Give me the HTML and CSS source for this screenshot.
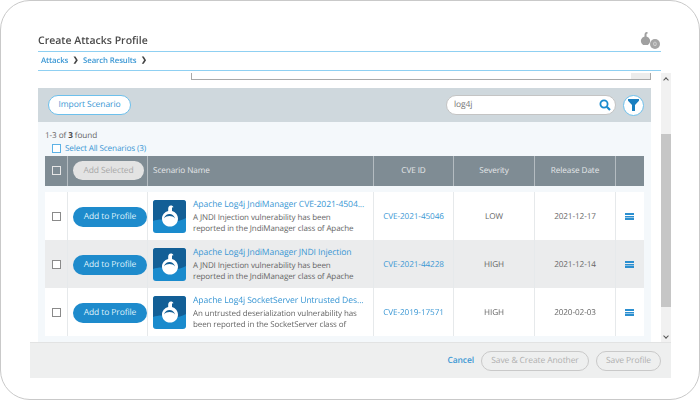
FILE: index.html
```html
<!DOCTYPE html>
<html lang="en">
<head>
    <meta charset="UTF-8">
    <title>Create Attacks Profile</title>
    <link rel="stylesheet" href="styles.css">
</head>
<body>
    <svg class="defs" width="0" height="0">
        <symbol id="bomb" viewBox="0 0 33 33">
            <path d="M3 0h27a3 3 0 0 1 3 3v27a3 3 0 0 1-3 3H3a3 3 0 0 1-3-3V3a3 3 0 0 1 3-3z" fill="#1a8bcd"/>
            <path d="M0 3a3 3 0 0 1 3-3h27a3 3 0 0 1 3 3v15c-5 3-10 4-16.500 2.500C10 19 5 19 0 21z" fill="#135f96"/>
            <path d="M20.500 7.500c-.6-2.300-3.700-2.600-4.800-.8-.6 1-.5 2.500-.5 4.300-3.700 1-6.200 4-6.200 7.700 0 4.400 3.500 7.800 8 7.800s8-3.400 8-7.800c0-3.600-2.500-6.700-6-7.700V8.500c0-1 .9-1.500 1.600-.8z" fill="#fff"/>
            <path d="M10.800 18.500c1.300-3.300 3.300-4.500 5.700-4.500s4.400 1.200 5.700 4.500c-1.700-1.800-3.500-2.500-5.700-2.500s-4 .7-5.700 2.500z" fill="#135f96"/>
        </symbol>
    </svg>

    <div class="frame">
        <div class="dialog">
            <div class="dialog-head">
                <h1>Create Attacks Profile</h1>
                <div class="counter">
                    <svg class="counter-icon" width="11" height="14" viewBox="0 0 11 14"><path d="M7.500 1.200C6 .6 4.500 1.600 4.500 4v1.500a4.600 4.600 0 1 0 2 0V4c0-1 .4-1.500 1.300-1.400z" fill="#a0a0a0"/></svg>
                    <span class="counter-badge">0</span>
                </div>
            </div>
            <div class="crumbs">
                <a>Attacks</a><span class="chev">&#10095;</span><a>Search Results</a><span class="chev">&#10095;</span>
            </div>

            <div class="scroll-area">
                <div class="content">
                    <div class="input-stub"><span class="stub-bar"></span></div>

                    <div class="panel">
                        <div class="toolbar">
                            <button class="btn-import">Import Scenario</button>
                            <div class="search">
                                <span>log4j</span>
                                <svg width="12" height="12" viewBox="0 0 12 12"><circle cx="5" cy="5" r="3.600" fill="none" stroke="#1a8bcd" stroke-width="1.800"/><path d="M7.800 7.800L11 11" stroke="#1a8bcd" stroke-width="2.200"/></svg>
                            </div>
                            <div class="filter">
                                <svg width="11" height="12" viewBox="0 0 11 12"><path d="M0 0h11v1.800L7 6v6H4V6L0 1.800z" fill="#1a7fc0"/></svg>
                            </div>
                        </div>

                        <div class="found">1-3 of <b>3</b> found</div>
                        <label class="select-all"><span class="check blue"></span>Select All Scenarios (3)</label>

                        <div class="row head">
                            <div class="cell"><span class="check light"></span></div>
                            <div class="cell"><button class="btn-selected">Add Selected</button></div>
                            <div class="cell left">Scenario Name</div>
                            <div class="cell">CVE ID</div>
                            <div class="cell">Severity</div>
                            <div class="cell">Release Date</div>
                            <div class="cell"></div>
                        </div>

                        <div class="rows">
                            <div class="row">
                                <div class="cell"><span class="check"></span></div>
                                <div class="cell"><button class="btn-add">Add to Profile</button></div>
                                <div class="cell scenario">
                                    <svg class="scenario-icon"><use href="#bomb"/></svg>
                                    <div class="scenario-text">
                                        <a class="scenario-title">Apache Log4j JndiManager CVE-2021-4504...</a>
                                        <p>A JNDI Injection vulnerability has been reported in the JndiManager class of Apache</p>
                                    </div>
                                </div>
                                <div class="cell"><a>CVE-2021-45046</a></div>
                                <div class="cell">LOW</div>
                                <div class="cell">2021-12-17</div>
                                <div class="cell"><span class="menu"></span></div>
                            </div>
                            <div class="row grey">
                                <div class="cell"><span class="check"></span></div>
                                <div class="cell"><button class="btn-add">Add to Profile</button></div>
                                <div class="cell scenario">
                                    <svg class="scenario-icon"><use href="#bomb"/></svg>
                                    <div class="scenario-text">
                                        <a class="scenario-title">Apache Log4j JndiManager JNDI Injection</a>
                                        <p>A JNDI Injection vulnerability has been reported in the JndiManager class of Apache</p>
                                    </div>
                                </div>
                                <div class="cell"><a>CVE-2021-44228</a></div>
                                <div class="cell">HIGH</div>
                                <div class="cell">2021-12-14</div>
                                <div class="cell"><span class="menu"></span></div>
                            </div>
                            <div class="row">
                                <div class="cell"><span class="check"></span></div>
                                <div class="cell"><button class="btn-add">Add to Profile</button></div>
                                <div class="cell scenario">
                                    <svg class="scenario-icon"><use href="#bomb"/></svg>
                                    <div class="scenario-text">
                                        <a class="scenario-title">Apache Log4j SocketServer Untrusted Des...</a>
                                        <p>An untrusted deserialization vulnerability has been reported in the SocketServer class of</p>
                                    </div>
                                </div>
                                <div class="cell"><a>CVE-2019-17571</a></div>
                                <div class="cell">HIGH</div>
                                <div class="cell">2020-02-03</div>
                                <div class="cell"><span class="menu"></span></div>
                            </div>
                        </div>
                    </div>
                </div>

                <div class="scrollbar">
                    <span class="arrow up"></span>
                    <div class="track"><div class="thumb"></div></div>
                    <span class="arrow down"></span>
                </div>
            </div>

            <div class="dialog-foot">
                <a class="cancel">Cancel</a>
                <button class="btn-save wide">Save &amp; Create Another</button>
                <button class="btn-save">Save Profile</button>
            </div>
        </div>
    </div>
</body>
</html>
```

FILE: styles.css
```css
* {
    box-sizing: border-box;
}
html, body {
    margin: 0;
    padding: 0;
    background: #fff;
}
body {
    font-family: "Open Sans", Arial, sans-serif;
    font-size: 8.2px;
    letter-spacing: -0.1px;
    text-rendering: geometricPrecision;
    color: #666;
    overflow: hidden;
}
a {
    color: #3a97d4;
}
button {
    font-family: inherit;
    letter-spacing: inherit;
    text-rendering: inherit;
    padding: 0;
}
.defs {
    position: absolute;
}
.frame {
    width: 700px;
    height: 400px;
    border: 1px solid #c9c9c9;
    border-radius: 30px;
    padding: 29px 0 0 29px;
}
/* the screenshot is a bit soft */
.dialog {
    width: 641px;
    height: 348px;
    display: flex;
    flex-direction: column;
    filter: blur(0.5px);
}
.dialog-head {
    height: 22px;
    margin-left: 8px;
    width: 623px;
    border-bottom: 1px solid #8fd0f2;
    display: flex;
    justify-content: space-between;
}
h1 {
    margin: 3px 0 0;
    font-size: 10.5px;
    font-weight: 600;
    letter-spacing: 0;
    color: #4a4a4a;
    line-height: 17px;
}
.counter {
    width: 20px;
    height: 20px;
    margin-right: 1px;
    display: flex;
    align-items: flex-start;
    padding-top: 1px;
}
.counter-icon {
    flex: none;
}
.counter-badge {
    flex: none;
    width: 10px;
    height: 10px;
    margin: 8px 0 0 -1px;
    border-radius: 50%;
    background: #a5a5a5;
    color: #eee;
    font-size: 6px;
    line-height: 10px;
    text-align: center;
}
.crumbs {
    height: 19px;
    margin-left: 8px;
    width: 623px;
    padding-left: 3px;
    border-bottom: 1px solid #8fd0f2;
    display: flex;
    align-items: center;
    font-size: 7.8px;
    font-weight: 600;
}
.chev {
    margin: 0 4.500px;
    color: #444;
    font-size: 7px;
    font-weight: 700;
}
.scroll-area {
    height: 270px;
    margin-top: 2px;
    display: flex;
    overflow: hidden;
}
.content {
    width: 631px;
    padding-left: 8px;
}
.input-stub {
    height: 7px;
    margin-left: 153px;
    width: 460px;
    border: 1px solid #a9a9a9;
    border-top: 0;
    display: flex;
    justify-content: flex-end;
}
.stub-bar {
    width: 19px;
    background: #ececec;
}
.panel {
    width: 613px;
    height: 254px;
    margin-top: 8px;
    background: #f4f8fb;
}
.toolbar {
    height: 34px;
    padding: 7px 7px 0 10px;
    background: #cfd8dd;
    display: flex;
    align-items: flex-start;
}
.btn-import {
    width: 83px;
    height: 20px;
    border: 1px solid #6dc0ec;
    border-radius: 10px;
    background: #fff;
    color: #3a97d4;
    font-size: 8.5px;
}
.search {
    width: 170px;
    height: 20px;
    margin-left: auto;
    padding: 0 4px 0 7px;
    border: 1px solid #c4c4c4;
    border-radius: 10px;
    background: #fff;
    display: flex;
    align-items: center;
    justify-content: space-between;
    font-size: 8.5px;
    color: #777;
}
.filter {
    width: 21px;
    height: 21px;
    margin-left: 7px;
    border: 1px solid #6dc0ec;
    border-radius: 50%;
    background: #fff;
    display: flex;
    align-items: center;
    justify-content: center;
}
.found {
    margin: 8px 0 0 7px;
    line-height: 12px;
}
.found b {
    color: #444;
}
.select-all {
    margin: 0 0 0 14px;
    height: 13px;
    display: flex;
    align-items: center;
    gap: 4px;
    letter-spacing: -0.15px;
    color: #3a97d4;
}
.check {
    display: block;
    width: 9px;
    height: 9px;
    border: 1px solid #8a8a8a;
    background: #fff;
}
.check.blue {
    border-color: #5db2e6;
}
.check.light {
    border-color: #e6e6e6;
    background: none;
}
.row {
    width: 599px;
    margin-left: 7px;
    display: grid;
    grid-template-columns: 23px 80px 226px 80px 81px 81px 28px;
    height: 48px;
    background: #fff;
    color: #666;
}
.row.grey {
    background: #ebeced;
}
.row.head {
    height: 30px;
    margin-top: 1px;
    background: #7f8c94;
    color: #e4e7e9;
}
.rows {
    margin-top: 6px;
}
.rows .cell {
    padding-top: 2px;
}
.cell {
    display: flex;
    align-items: center;
    justify-content: center;
    border-right: 1px solid #e6e9eb;
    min-width: 0;
}
.cell:last-child {
    border-right: 0;
}
.head .cell {
    border-right-color: #b4bcc1;
}
.cell.left {
    justify-content: flex-start;
    padding-left: 5px;
}
.btn-selected {
    width: 71px;
    height: 19px;
    margin-left: 2px;
    border: 0;
    border-radius: 10px;
    background: #e3e3e3;
    color: #a8a8a8;
    font-size: 8.5px;
}
.btn-add {
    width: 74px;
    height: 20px;
    margin-left: 5px;
    border: 0;
    border-radius: 10px;
    background: #1e8bcc;
    color: #dff0fa;
    font-size: 8.5px;
}
.rows .scenario {
    justify-content: flex-start;
    align-items: flex-start;
    padding: 8px 0 0 5px;
}
.scenario-icon {
    width: 33px;
    height: 33px;
    flex: none;
}
.scenario-text {
    width: 176px;
    margin-left: 7px;
    margin-top: -2px;
}
.scenario-title {
    display: block;
    font-size: 8.6px;
    line-height: 13px;
    white-space: nowrap;
}
.scenario-text p {
    margin: 1px 0 0;
    width: 166px;
    font-size: 8px;
    line-height: 11.500px;
}
.menu {
    display: block;
    width: 9px;
    height: 7px;
    border-top: 2px solid #2b8fd0;
    border-bottom: 2px solid #2b8fd0;
    background: linear-gradient(#2b8fd0, #2b8fd0) center / 100% 1.500px no-repeat;
    margin-left: -1px;
}
.scrollbar {
    width: 10px;
    height: 270px;
    background: #f1f1f1;
    display: flex;
    flex-direction: column;
    align-items: center;
}
.track {
    flex: 1;
    width: 10px;
    padding-top: 47px;
}
.thumb {
    height: 173px;
    background: #c6c6c6;
}
.arrow {
    width: 4px;
    height: 4px;
    margin: 5px 0;
    border-left: 1px solid #555;
    border-top: 1px solid #555;
}
.arrow.up {
    transform: rotate(45deg);
}
.arrow.down {
    transform: rotate(225deg);
}
.dialog-foot {
    height: 36px;
    background: #eeefef;
    border-top: 1px solid #e2e3e3;
    padding-right: 10px;
    display: flex;
    align-items: center;
    justify-content: flex-end;
}
.cancel {
    margin-right: 0;
    font-size: 8.5px;
    font-weight: 600;
}
.btn-save {
    width: 65px;
    height: 20px;
    margin-left: 7px;
    border: 1px solid #c9c9c9;
    border-radius: 10px;
    background: #eeefef;
    color: #b0b0b0;
    font-size: 8.5px;
}
.btn-save.wide {
    width: 108px;
}
```
